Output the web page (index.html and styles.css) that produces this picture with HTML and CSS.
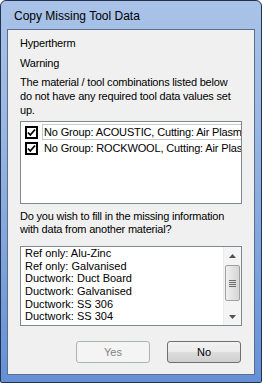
FILE: index.html
```html
<!DOCTYPE html>
<html lang="en">
<head>
<meta charset="UTF-8" />
<title>Copy Missing Tool Data</title>
<link rel="stylesheet" href="styles.css">
</head>
<body>

<div class="window">
  <div class="titlebar">Copy Missing Tool Data</div>

  <div class="client">
    <p class="label first">Hypertherm</p>
    <p class="label warn">Warning</p>
    <p class="label para">The material / tool combinations listed below do not have any required tool data values set up.</p>

    <ul class="checklist">
      <li class="focused">
        <svg class="check" width="13" height="13" viewBox="0 0 13 13"><rect x="1" y="1" width="11" height="11" fill="#fff" stroke="#000" stroke-width="2"/><path d="M3 6.5 L5.3 9 L10 3.5" fill="none" stroke="#000" stroke-width="1.8"/></svg>
        <span>No Group: ACOUSTIC, Cutting: Air Plasma</span>
      </li>
      <li>
        <svg class="check" width="13" height="13" viewBox="0 0 13 13"><rect x="1" y="1" width="11" height="11" fill="#fff" stroke="#000" stroke-width="2"/><path d="M3 6.5 L5.3 9 L10 3.5" fill="none" stroke="#000" stroke-width="1.8"/></svg>
        <span>No Group: ROCKWOOL, Cutting: Air Plasma</span>
      </li>
    </ul>

    <p class="label question">Do you wish to fill in the missing information with data from another material?</p>

    <div class="listbox">
      <ul class="items">
        <li>Ref only: Alu-Zinc</li>
        <li>Ref only: Galvanised</li>
        <li>Ductwork: Duct Board</li>
        <li>Ductwork: Galvanised</li>
        <li>Ductwork: SS 306</li>
        <li>Ductwork: SS 304</li>
      </ul>
      <div class="scrollbar">
        <div class="arrow"><svg width="7" height="4" viewBox="0 0 7 4"><path d="M0 4 L3.5 0 L7 4 Z" fill="#505050"/></svg></div>
        <div class="track">
          <div class="thumb"><span></span><span></span><span></span><span></span></div>
        </div>
        <div class="arrow"><svg width="7" height="4" viewBox="0 0 7 4"><path d="M0 0 L7 0 L3.5 4 Z" fill="#505050"/></svg></div>
      </div>
    </div>

    <div class="buttons">
      <button class="btn" disabled>Yes</button>
      <button class="btn">No</button>
    </div>
  </div>
</div>

</body>
</html>
```

FILE: styles.css
```css
body { margin: 0; background: #fff; font-family: "Liberation Sans", Arial, sans-serif; font-size: 11px; color: #000; }

.window {
  width: 262px; height: 383px; box-sizing: border-box;
  border: 1px solid #24334d; border-radius: 6px 6px 2px 2px;
  background: linear-gradient(#a9c3e8, #98b6e2 35%, #6590d6);
  padding: 0 6px 7px 6px;
  display: flex; flex-direction: column;
}
.titlebar {
  height: 28px; line-height: 30px; padding-left: 7px;
  font-family: "Liberation Sans", Arial, sans-serif; font-size: 12px; color: #000;
}
.client {
  flex: 1; background: #f0f0f0; border: 1px solid #5b6f8d;
  padding: 0 12px; display: flex; flex-direction: column;
}

.label { margin: 0; line-height: 13px; letter-spacing: -0.2px; }
.first { margin-top: 7px; }
.warn { margin-top: 7px; }
.para { margin-top: 5px; line-height: 14px; }
.question { margin-top: 6px; }

.checklist {
  list-style: none; margin: 4px 0 0 0; padding: 2px 0 0 0;
  height: 79px; background: #fff; border: 1px solid #828790;
  white-space: nowrap; overflow: hidden;
}
.checklist li { display: flex; align-items: center; height: 16px; padding-left: 4px; }
.checklist li.focused span { outline: 1px solid #c8c8c8; outline-offset: 0; }
.checklist .check { flex: none; margin-right: 5px; }
.checklist span { display: block; flex: 1; line-height: 14px; padding-left: 1px; overflow: hidden; letter-spacing: -0.15px; }

.listbox {
  margin-top: 10px; height: 78px; background: #fff; border: 1px solid #828790;
  display: flex; overflow: hidden;
}
.items { list-style: none; margin: 0; padding: 0 0 0 4px; flex: 1; }
.items li { line-height: 13px; height: 12.7px; white-space: nowrap; }

.scrollbar { width: 17px; display: flex; flex-direction: column; background: #f4f4f4; border-left: 1px solid #ececec; }
.arrow { height: 17px; display: flex; align-items: center; justify-content: center; }
.track { flex: 1; padding: 1px 1px; }
.thumb {
  height: 34px; border: 1px solid #a0a0a0; border-radius: 2px;
  background: linear-gradient(90deg, #f0f0f0, #e2e2e2 50%, #d6d6d6);
  display: flex; flex-direction: column; align-items: center; justify-content: center; gap: 1px;
}
.thumb span { width: 7px; height: 1px; background: #6b6b6b; }

.buttons { display: flex; justify-content: flex-end; gap: 17px; margin-top: 15px; padding-right: 1px; }
.btn {
  width: 74px; height: 22px; border: 1px solid #707070; border-radius: 3px;
  background: linear-gradient(#f2f2f2, #ebebeb 50%, #dddddd 51%, #cfcfcf);
  font-family: "Liberation Sans", Arial, sans-serif; font-size: 11px; color: #000; padding: 0;
}
.btn:disabled { border-color: #adb2b5; background: #f4f4f4; color: #838383; }
```
